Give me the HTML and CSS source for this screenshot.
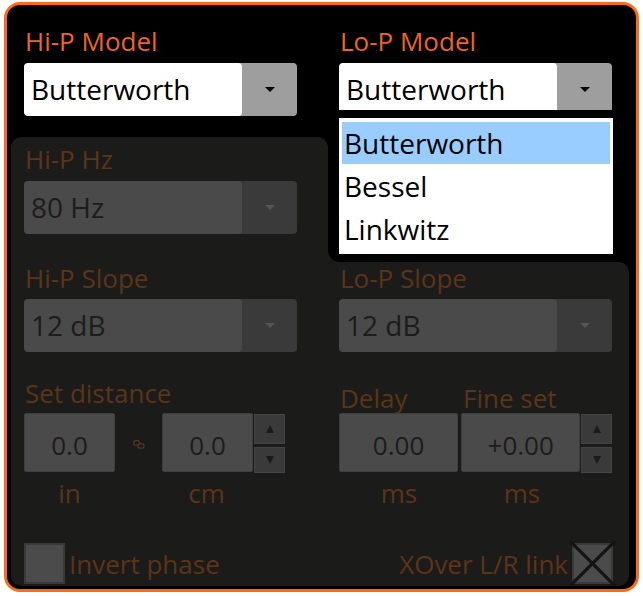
FILE: index.html
```html
<!DOCTYPE html>
<html>
<head>
<meta charset="utf-8">
<link rel="stylesheet" href="styles.css">
</head>
<body>
<div class="frame">
  <div class="row header">
    <div class="field">
      <div class="label">Hi-P Model</div>
      <div class="combo"><span class="combo-text">Butterworth</span><span class="combo-btn"><i class="caret"></i></span></div>
    </div>
    <div class="field">
      <div class="label">Lo-P Model</div>
      <div class="combo"><span class="combo-text">Butterworth</span><span class="combo-btn"><i class="caret"></i></span></div>
    </div>
  </div>

  <div class="panel">
    <div class="row row-a">
      <div class="field">
        <div class="label">Hi-P Hz</div>
        <div class="combo disabled"><span class="combo-text">80 Hz</span><span class="combo-btn"><i class="caret"></i></span></div>
      </div>
      <div></div>
    </div>

    <div class="row row-b">
      <div class="field">
        <div class="label">Hi-P Slope</div>
        <div class="combo disabled"><span class="combo-text">12 dB</span><span class="combo-btn"><i class="caret"></i></span></div>
      </div>
      <div class="field">
        <div class="label">Lo-P Slope</div>
        <div class="combo disabled"><span class="combo-text">12 dB</span><span class="combo-btn"><i class="caret"></i></span></div>
      </div>
    </div>

    <div class="row row-c">
      <div class="field">
        <div class="label">Set distance</div>
        <div class="numrow">
          <div class="numbox w91">0.0</div>
          <svg class="link" width="12" height="9" viewBox="0 0 12 9"><g fill="none" stroke="#5b3419" stroke-width="1.2"><rect x="0.6" y="0.6" width="6" height="4.6" rx="2.3"/><rect x="5" y="3.6" width="6" height="4.6" rx="2.3"/></g></svg>
          <div class="numbox w91">0.0</div>
          <div class="spin"><span class="up"><i></i></span><span class="down"><i></i></span></div>
        </div>
      </div>
      <div class="field">
        <div class="sublabels"><span class="label w123">Delay</span><span class="label">Fine set</span></div>
        <div class="numrow tight">
          <div class="numbox w120">0.00</div>
          <div class="numbox w120">+0.00</div>
          <div class="spin"><span class="up"><i></i></span><span class="down"><i></i></span></div>
        </div>
      </div>
    </div>

    <div class="row row-d">
      <div class="units">
        <span class="unit w91">in</span>
        <span class="unit w91 second">cm</span>
      </div>
      <div class="units">
        <span class="unit w120">ms</span>
        <span class="unit w120 second-r">ms</span>
      </div>
    </div>

    <div class="row row-e">
      <div class="check-line">
        <span class="checkbox"></span>
        <span class="label">Invert phase</span>
      </div>
      <div class="check-line right">
        <span class="label">XOver L/R link</span>
        <span class="checkbox xbox"><svg class="x" viewBox="0 0 48 48" width="48" height="48"><path d="M2 2 L46 46 M46 2 L2 46" stroke="#141414" stroke-width="3.2" fill="none"/></svg></span>
      </div>
    </div>
  </div>

  <div class="popup">
    <ul class="list">
      <li class="selected">Butterworth</li>
      <li>Bessel</li>
      <li>Linkwitz</li>
    </ul>
  </div>
</div>
</body>
</html>
```

FILE: styles.css
```css
html, body {
  margin: 0;
  padding: 0;
  background: #ffffff;
}

body {
  font-family: "Open Sans", "Noto Sans", sans-serif;
}

.frame {
  position: relative;
  box-sizing: border-box;
  width: 635px;
  height: 590px;
  margin: 2px 0 0 4px;
  border: 3px solid #ff6a17;
  border-radius: 16px;
  background: #000;
  display: flex;
  flex-direction: column;
}

.row {
  display: grid;
  grid-template-columns: 273px 273px;
  column-gap: 42px;
}

.header {
  padding: 21px 0 0 17px;
}

.field {
  display: flex;
  flex-direction: column;
}

.label {
  font-size: 26px;
  line-height: 30px;
  height: 30px;
  color: #ec661c;
  white-space: nowrap;
  padding-left: 1px;
}

.combo {
  margin-top: 7px;
  height: 53px;
  display: flex;
  border-radius: 4px;
  overflow: hidden;
  background: #9e9e9e;
}

.combo-text {
  width: 218px;
  box-sizing: border-box;
  padding-left: 7px;
  background: #fff;
  color: #000;
  font-size: 28px;
  line-height: 53px;
  border-radius: 4px;
  white-space: nowrap;
}

.combo-btn {
  flex: 1;
  display: flex;
  align-items: center;
  justify-content: center;
}

.caret {
  width: 0;
  height: 0;
  border-left: 5px solid transparent;
  border-right: 5px solid transparent;
  border-top: 5px solid #000;
  margin-left: 1px;
}

.panel {
  flex: 1;
  margin: 21px 7px 3px 4px;
  padding: 7px 17px 2px 13px;
  background: #1b1b1a;
  border-radius: 10px;
  display: flex;
  flex-direction: column;
}

.panel .label {
  color: #5c3418;
}

.combo.disabled {
  background: #3a3a3a;
}

.combo.disabled .combo-text {
  background: #4a4a4a;
  color: #1c1c1c;
}

.combo.disabled .caret {
  border-top-color: #555;
}

.row-b {
  margin-top: 29px;
}

.combo.disabled {
  margin-top: 7px;
}

.row-b .combo.disabled {
  margin-top: 6px;
}

.row-c {
  margin-top: 26px;
}

.numrow {
  margin-top: 5px;
  display: flex;
  align-items: flex-start;
}

.sublabels {
  display: flex;
  margin-top: 5px;
}

.sublabels .label {
  display: block;
}

.w123 {
  width: 122px;
}

.numrow.tight {
  margin-top: 0;
}

.numbox {
  box-sizing: border-box;
  height: 59px;
  background: #4a4a4a;
  border: 1px solid #3e3e3e;
  border-radius: 2px;
  color: #1c1c1c;
  font-size: 26px;
  line-height: 30px;
  padding-top: 16px;
  text-align: center;
}

.w91 {
  width: 91px;
}

.w120 {
  width: 120px;
}

.tight .numbox + .numbox {
  margin-left: 3px;
}

.link {
  margin: 27px 17px 0 18px;
}

.spin {
  margin-left: 1px;
  width: 31px;
  display: flex;
  flex-direction: column;
  padding-top: 1px;
}

.spin span {
  box-sizing: border-box;
  background: #3a3a3a;
  border: 1px solid #444;
  display: flex;
  align-items: center;
  justify-content: center;
}

.spin .up {
  height: 30px;
}

.spin .down {
  height: 26px;
  margin-top: 3px;
}

.spin .up i {
  width: 0;
  height: 0;
  border-left: 4.5px solid transparent;
  border-right: 4.5px solid transparent;
  border-bottom: 8px solid #1a1a1a;
}

.spin .down i {
  width: 0;
  height: 0;
  border-left: 4.5px solid transparent;
  border-right: 4.5px solid transparent;
  border-top: 8px solid #1a1a1a;
}

.row-d {
  margin-top: 5px;
}

.units {
  display: flex;
}

.unit {
  font-size: 26px;
  line-height: 30px;
  color: #5c3418;
  text-align: center;
}

.unit.second {
  margin-left: 46px;
}

.unit.second-r {
  margin-left: 3px;
}

.row-e {
  margin-top: auto;
}

.check-line {
  display: flex;
  align-items: center;
}

.check-line.right {
  justify-content: flex-end;
  margin-right: -1px;
}

.checkbox {
  position: relative;
  box-sizing: border-box;
  width: 41px;
  height: 41px;
  background: #4b4b4b;
  border: 2px solid #3a3a3a;
  flex: none;
}

.check-line .label {
  padding-left: 4px;
  padding-top: 1px;
}

.check-line.right .label {
  padding-left: 0;
  padding-right: 4px;
}

.xbox .x {
  position: absolute;
  left: -6px;
  top: -6px;
  width: 49px;
  height: 49px;
}

.popup {
  position: absolute;
  left: 321px;
  right: 0;
  top: 105px;
  height: 152px;
  background: #000;
  border-bottom-left-radius: 12px;
  box-sizing: border-box;
  padding: 8px 0 0 11px;
}

.popup::before {
  content: "";
  position: absolute;
  left: -10px;
  top: 27px;
  width: 10px;
  height: 10px;
  background: radial-gradient(circle at 0 100%, transparent 9.5px, #000 10px);
}

.popup::after {
  content: "";
  position: absolute;
  left: 291px;
  top: 152px;
  width: 10px;
  height: 10px;
  background: radial-gradient(circle at 0 100%, transparent 9.5px, #000 10px);
}

.list {
  list-style: none;
  margin: 0;
  width: 274px;
  height: 136px;
  box-sizing: border-box;
  padding: 4px 3px 0 3px;
  background: #fff;
}

.list li {
  height: 43px;
  line-height: 42px;
  font-size: 28px;
  color: #000;
  padding-left: 2px;
  white-space: nowrap;
}

.list li.selected {
  height: 42px;
  margin-bottom: 1px;
  background: #99ccff;
}
```
